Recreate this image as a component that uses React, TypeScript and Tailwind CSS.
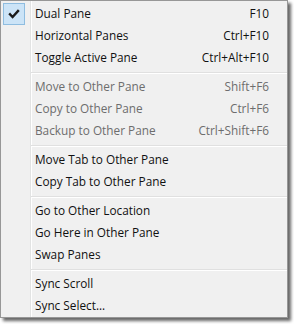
type Item = {
  label: string
  shortcut?: string
  disabled?: boolean
  checked?: boolean
}

const GROUPS: Item[][] = [
  [
    { label: 'Dual Pane', shortcut: 'F10', checked: true },
    { label: 'Horizontal Panes', shortcut: 'Ctrl+F10' },
    { label: 'Toggle Active Pane', shortcut: 'Ctrl+Alt+F10' },
  ],
  [
    { label: 'Move to Other Pane', shortcut: 'Shift+F6', disabled: true },
    { label: 'Copy to Other Pane', shortcut: 'Ctrl+F6', disabled: true },
    { label: 'Backup to Other Pane', shortcut: 'Ctrl+Shift+F6', disabled: true },
  ],
  [{ label: 'Move Tab to Other Pane' }, { label: 'Copy Tab to Other Pane' }],
  [{ label: 'Go to Other Location' }, { label: 'Go Here in Other Pane' }, { label: 'Swap Panes' }],
  [{ label: 'Sync Scroll' }, { label: 'Sync Select...' }],
]

function CheckMark() {
  return (
    <svg className="h-[20px] w-[20px]" viewBox="0 0 20 20">
      <path d="M6 10.2l2.6 2.8L14 7" fill="none" stroke="#1a1a1a" strokeWidth={2.4} strokeLinecap="square" />
    </svg>
  )
}

function MenuRow({ item }: { item: Item }) {
  return (
    <div className={`flex h-[22px] items-center pr-[18px] ${item.disabled ? 'text-[#6d6d6d]' : 'text-[#111]'}`}>
      <div className="flex w-[34px] items-center pl-[2px]">
        {item.checked ? (
          <div className="flex h-[22px] w-[22px] items-center justify-center border border-[#8fbde0] bg-[#cce4f7]">
            <CheckMark />
          </div>
        ) : null}
      </div>
      <span className="flex-1">{item.label}</span>
      {item.shortcut ? <span>{item.shortcut}</span> : null}
    </div>
  )
}

export default function App() {
  return (
    <div className="h-[324px] w-[294px] bg-white">
      <div
        className="h-[318px] w-[288px] border border-[#979797] bg-[#f0f0f0] bg-[linear-gradient(to_right,#f0f0f0_29px,#e2e3e3_29px,#e2e3e3_30px,#ffffff_30px,#ffffff_31px,#f0f0f0_31px)] pt-[2px] text-[11.8px] shadow-[3px_3px_3px_rgba(0,0,0,0.6)]"
        style={{ fontFamily: '"Open Sans", "Noto Sans", sans-serif' }}
      >
        {GROUPS.map((group, gi) => (
          <div key={gi}>
            {gi > 0 ? (
              <div className="flex h-[7px] items-center pl-[30px]">
                <div className="h-[2px] w-full border-t border-[#e0e0e0] bg-white" />
              </div>
            ) : null}
            {group.map((item) => (
              <MenuRow key={item.label} item={item} />
            ))}
          </div>
        ))}
      </div>
    </div>
  )
}
